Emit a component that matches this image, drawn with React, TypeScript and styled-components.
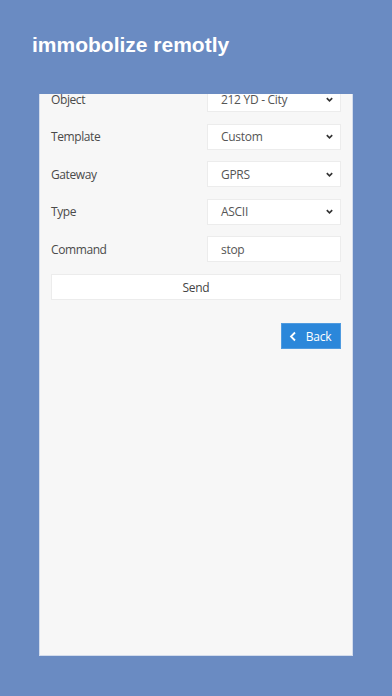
import React from 'react';
import styled, { createGlobalStyle } from 'styled-components';

const GlobalStyle = createGlobalStyle`
  html, body {
    margin: 0;
    padding: 0;
    background: #6a8bc2;
  }
  * {
    box-sizing: border-box;
  }
`;

const Page = styled.div`
  width: 392px;
  height: 696px;
  background: #6a8bc2;
  display: flex;
  flex-direction: column;
`;

const Title = styled.h1`
  margin: 0;
  padding: 32px 0 0 32px;
  height: 94px;
  font-family: 'Liberation Sans', Arial, sans-serif;
  font-weight: bold;
  font-size: 21px;
  line-height: 26px;
  color: #ffffff;
`;

const Panel = styled.div`
  margin: 0 39px;
  height: 562px;
  background: #f7f7f7;
  border: 1px solid #d3dcec;
  border-top: none;
  overflow: hidden;
`;

const Form = styled.div`
  margin-top: -8px;
  padding: 0 11px;
  display: flex;
  flex-direction: column;
  gap: 11.5px;
`;

const Row = styled.div`
  display: flex;
  align-items: center;
  height: 26px;
`;

const Label = styled.span`
  flex: 1;
  font-family: 'Open Sans', sans-serif;
  font-size: 12px;
  letter-spacing: -0.4px;
  color: #4a4a4a;
`;

const Field = styled.div`
  width: 134px;
  height: 26px;
  background: #ffffff;
  border: 1px solid #ececec;
  display: flex;
  align-items: center;
  justify-content: space-between;
  padding: 0 6px 0 13px;
  font-family: 'Open Sans', sans-serif;
  font-size: 12px;
  letter-spacing: -0.3px;
  color: #555555;
`;

const SendButton = styled.div`
  margin-top: 0.5px;
  height: 26px;
  background: #ffffff;
  border: 1px solid #ececec;
  display: flex;
  align-items: center;
  justify-content: center;
  font-family: 'Open Sans', sans-serif;
  font-size: 12px;
  letter-spacing: -0.3px;
  color: #444444;
`;

const Actions = styled.div`
  display: flex;
  justify-content: flex-end;
  padding: 0 11px;
  margin-top: 23px;
`;

const BackButton = styled.div`
  width: 60px;
  height: 26px;
  background: #2b87da;
  border: 1px solid #4f9be0;
  display: flex;
  align-items: center;
  justify-content: center;
  gap: 9px;
  font-family: 'Open Sans', sans-serif;
  font-size: 12px;
  letter-spacing: -0.2px;
  color: #ffffff;
  padding-right: 2px;
`;

const Chevron = ({ dir }: { dir: 'down' | 'left' }) =>
  dir === 'down' ? (
    <svg width="9" height="9" viewBox="0 0 10 10">
      <path d="M2 3.5 L5 6.5 L8 3.5" fill="none" stroke="#333" strokeWidth="1.8" />
    </svg>
  ) : (
    <svg width="8" height="11" viewBox="0 0 8 11">
      <path d="M6 1.5 L2 5.5 L6 9.5" fill="none" stroke="#fff" strokeWidth="1.8" />
    </svg>
  );

const selects = [
  { label: 'Object', value: '212 YD - City' },
  { label: 'Template', value: 'Custom' },
  { label: 'Gateway', value: 'GPRS' },
  { label: 'Type', value: 'ASCII' },
];

const App = () => (
  <Page>
    <GlobalStyle />
    <Title>immobolize remotly</Title>
    <Panel>
      <Form>
        {selects.map((s) => (
          <Row key={s.label}>
            <Label>{s.label}</Label>
            <Field>
              {s.value}
              <Chevron dir="down" />
            </Field>
          </Row>
        ))}
        <Row>
          <Label>Command</Label>
          <Field>stop</Field>
        </Row>
        <SendButton>Send</SendButton>
      </Form>
      <Actions>
        <BackButton>
          <Chevron dir="left" />
          Back
        </BackButton>
      </Actions>
    </Panel>
  </Page>
);

export default App;
